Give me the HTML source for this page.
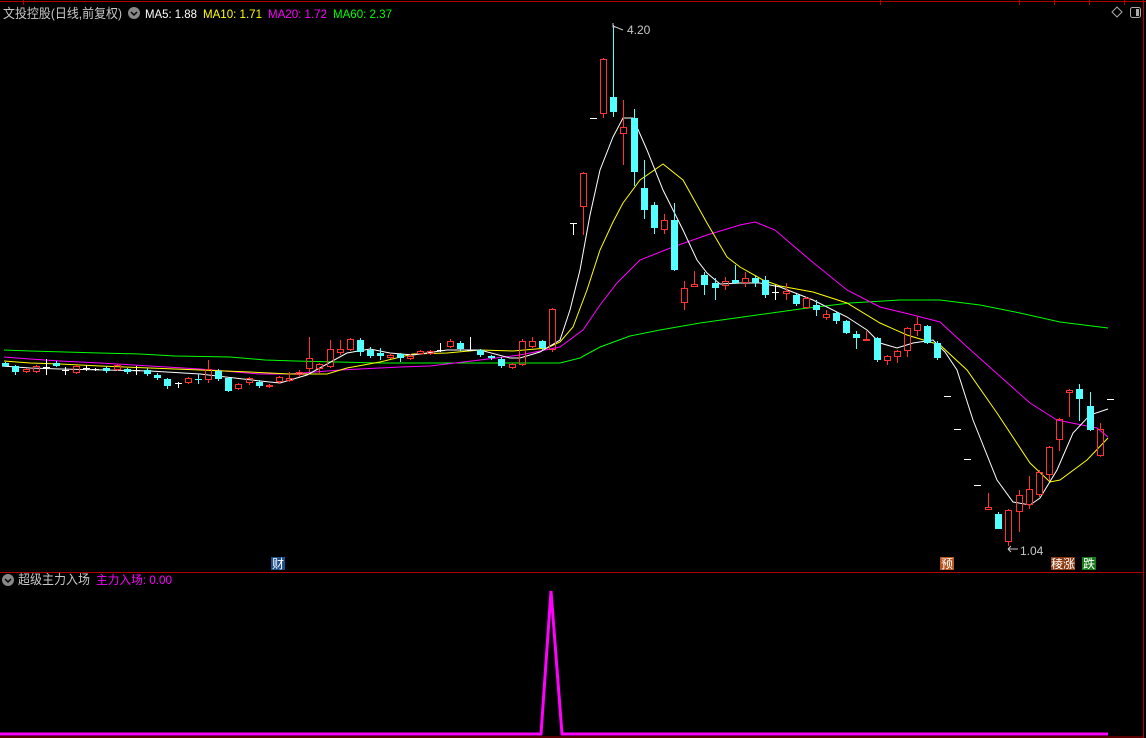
<!DOCTYPE html>
<html><head><meta charset="utf-8">
<style>
html,body{margin:0;padding:0;background:#000;width:1146px;height:738px;overflow:hidden}
svg{display:block}
text{font-family:"Liberation Sans","Noto Sans CJK SC",sans-serif}
</style></head>
<body>
<svg id="s" width="1146" height="738" viewBox="0 0 1146 738" xmlns="http://www.w3.org/2000/svg">
<rect width="1146" height="738" fill="#000"/>
<line x1="0" y1="1.5" x2="1146" y2="1.5" stroke="#b00000"/>
<g stroke="#b00000"><line x1="23.5" y1="0" x2="23.5" y2="5"/><line x1="880.5" y1="0" x2="880.5" y2="5"/><line x1="1019.5" y1="0" x2="1019.5" y2="5"/><line x1="1054.5" y1="0" x2="1054.5" y2="5"/><line x1="1089.5" y1="0" x2="1089.5" y2="5"/><line x1="1124.5" y1="0" x2="1124.5" y2="5"/></g>
<line x1="1143.5" y1="0" x2="1143.5" y2="738" stroke="#b00000"/>
<line x1="0" y1="572.5" x2="1143" y2="572.5" stroke="#b00000"/>
<line x1="0" y1="737" x2="1143" y2="737" stroke="#b00000"/>
<text x="3" y="18" font-size="13" fill="#c8c8c8" textLength="119" lengthAdjust="spacingAndGlyphs">文投控股(日线,前复权)</text>
<circle cx="134" cy="13" r="6" fill="#888"/><path d="M131 12l3 3 3-3" stroke="#000" stroke-width="1.5" fill="none"/>
<text x="145" y="18" font-size="12" fill="#fff" textLength="52" lengthAdjust="spacingAndGlyphs">MA5: 1.88</text>
<text x="203" y="18" font-size="12" fill="#ffff00" textLength="59" lengthAdjust="spacingAndGlyphs">MA10: 1.71</text>
<text x="268" y="18" font-size="12" fill="#ff00ff" textLength="59" lengthAdjust="spacingAndGlyphs">MA20: 1.72</text>
<text x="333" y="18" font-size="12" fill="#00ff00" textLength="59" lengthAdjust="spacingAndGlyphs">MA60: 2.37</text>
<path d="M1117 7l5 5-5 5-5-5z" stroke="#aaa" fill="none"/>
<rect x="1130.5" y="7.5" width="10" height="10" rx="2" stroke="#aaa" fill="none"/><rect x="1136" y="9" width="3" height="7" fill="#aaa"/>
<circle cx="8" cy="580" r="6" fill="#888"/><path d="M5 579l3 3 3-3" stroke="#000" stroke-width="1.5" fill="none"/>
<text x="18" y="584" font-size="13" fill="#c8c8c8" textLength="72" lengthAdjust="spacingAndGlyphs">超级主力入场</text>
<text x="96" y="584" font-size="12" fill="#ff00ff" textLength="76" lengthAdjust="spacingAndGlyphs">主力入场: 0.00</text>
<g id="ma" fill="none" stroke-width="1"></g>
<g id="cd"></g>
<text x="627" y="34" font-size="12" fill="#c8c8c8">4.20</text>
<path d="M613 26l10 4" stroke="#c8c8c8"/><path d="M613 23v4h3" stroke="#c8c8c8" fill="none"/>
<text x="1020" y="555" font-size="12" fill="#c8c8c8">1.04</text>
<path d="M1008 549h10M1008 549l3-3M1008 549l3 3" stroke="#c8c8c8" fill="none"/>
<rect x="271" y="557" width="14" height="13" fill="#1c4f8a"/><text x="272" y="568" font-size="12" fill="#fff">财</text>
<rect x="940" y="557" width="14" height="13" fill="#b5541c"/><text x="941" y="568" font-size="12" fill="#fff">预</text>
<rect x="1051" y="557" width="24" height="13" fill="#8a3a10"/><text x="1051" y="568" font-size="12" fill="#fff">稜涨</text>
<rect x="1082" y="557" width="14" height="13" fill="#1a7a1a"/><text x="1083" y="568" font-size="12" fill="#fff">跌</text>
<polyline points="0,734 541,734 551,591 562,734 1108,734" fill="none" stroke="#ff00ff" stroke-width="3"/>
</svg>
<script>
var NS="http://www.w3.org/2000/svg";
function el(t,a,p){var e=document.createElementNS(NS,t);for(var k in a)e.setAttribute(k,a[k]);p.appendChild(e);return e;}
var ma=document.getElementById('ma'),cd=document.getElementById('cd');
var lines={
"#00ff00":"4,350 30,351 65,352 100,353 140,354 175,356 230,357 265,360 295,361 380,363 560,363 580,358 600,347 630,336 660,330 700,323 750,316 800,309 850,303 900,300 940,300 980,305 1020,313 1060,322 1108,328",
"#ff00ff":"4,357 30,359 60,361 100,363 150,366 200,369 260,374 290,374 340,370 400,367 430,366 480,360 520,355 560,347 583,330 600,305 617,283 640,260 673,247 707,235 740,225 755,222 775,230 810,260 847,290 880,307 913,315 940,322 965,345 993,370 1030,403 1057,420 1097,428 1108,437",
"#ffff00":"4,361 30,363 60,364 100,366 150,368 200,370 250,372 290,374 327,374 347,368 380,362 413,354 447,353 480,350 513,351 547,348 560,342 573,327 587,290 600,250 613,222 623,203 640,180 663,164 683,180 707,223 727,257 740,267 763,280 780,286 813,292 847,303 880,323 907,335 940,345 967,370 997,413 1030,463 1050,482 1060,480 1087,460 1108,438",
"#ffffff":"2,366 30,368 60,369 150,371 200,374 260,381 280,383 307,375 347,353 370,349 390,353 413,355 447,350 480,350 510,358 520,358 540,352 560,340 570,310 580,270 590,215 600,170 613,137 623,118 633,118 647,150 663,190 683,230 697,260 707,273 720,284 740,283 760,283 780,287 813,300 847,317 867,330 880,343 897,348 913,343 933,340 945,352 957,370 973,420 997,480 1013,502 1030,505 1040,498 1057,470 1073,433 1090,415 1108,409"};
for(var c in lines)el('polyline',{points:lines[c],stroke:c},ma);
var D=[
[4.5,'d',363,366,362,367],[14.5,'d',366,372,365,375],[25.5,'u',369,372,368,373],[35.5,'u',366,372,365,373],[45.5,'w',367,367,359,375],
[55.5,'d',363,366,361,367],[65,'w',370,370,367,375],[75.5,'u',366,373,365,374],[85.5,'w',368,368,365,371],[95,'w',369,369,368,371],
[106,'d',368,371,366,373],[116.5,'u',365,370,364,371],[126.5,'d',369,372,368,374],[136,'w',370,370,366,375],[146.5,'d',370,374,368,376],
[156.5,'d',375,378,373,380],[166.5,'d',379,386,378,389],[177.5,'w',383,383,382,388],[187.5,'u',378,383,377,384],[197.5,'d',379,380,374,384],
[207.5,'u',369,380,360,383],[217.5,'d',371,379,369,381],[227.5,'d',378,391,377,392],[237.5,'u',384,389,383,390],[248.5,'u',378,383,377,385],
[258.5,'d',382,386,380,388],[268.5,'u',385,386,384,388],[278.5,'u',377,382,376,384],[288.5,'u',378,381,372,382],[299,'u',372,375,370,377],
[308.5,'u',358,369,337,372],[318.5,'u',364,369,363,373],[329.5,'u',349,367,340,368],[339.5,'u',349,353,340,355],[349.5,'u',339,350,338,351],
[359.5,'d',340,352,338,356],[369.5,'d',350,356,347,358],[379.5,'d',353,356,348,360],[389.5,'u',355,358,353,359],[399.5,'d',354,358,353,362],
[410,'u',356,359,354,360],[420,'u',351,354,350,355],[430,'u',351,354,350,355],[440,'w',350,350,343,352],[450,'u',341,347,339,348],
[460,'d',343,349,341,351],[470,'w',350,350,337,351],[480,'d',350,355,349,357],[490.5,'d',356,358,355,360],[500.5,'d',359,366,357,368],
[511.5,'u',364,368,363,369],[521.5,'u',341,365,339,366],[531.5,'u',341,347,337,348],[541.5,'d',341,348,340,350],[551.5,'u',309,350,308,352],
[572.5,'w',223,223,223,235],[582.5,'u',173,207,172,235],[592.5,'w',118,118,118,118],[602.5,'u',59,114,58,118],[612.5,'d',97,112,25,117],
[622.5,'u',127,134,100,165],[633.5,'d',118,172,109,186],[643.5,'d',188,210,160,219],[653.5,'d',205,228,202,234],[663.5,'u',220,230,214,234],
[673.5,'d',220,270,203,271],[683.5,'u',288,303,281,310],[693.5,'r',284,286,271,287],[703.5,'d',275,285,272,295],[714.5,'d',283,288,278,300],
[724.5,'u',281,286,277,290],[734.5,'d',280,283,265,284],[744.5,'u',278,283,272,287],[754.5,'d',278,283,276,287],[764.5,'d',280,295,276,298],
[774.5,'w',292,292,285,300],[785.5,'u',291,294,283,300],[795.5,'d',295,304,294,306],[805.5,'u',298,308,297,309],[815.5,'d',305,310,300,316],
[825.5,'r',314,317,310,320],[835.5,'d',313,321,312,324],[845.5,'d',321,333,320,334],[855.5,'d',334,338,331,349],[865.5,'r',339,340,331,341],
[876.5,'d',338,360,337,362],[886.5,'u',356,361,355,365],[896.5,'u',351,357,350,363],[906.5,'u',328,351,327,357],[916.5,'u',324,331,317,336],
[926.5,'d',326,343,325,344],[937,'d',343,358,341,360],[946.5,'w',396,396,396,396],[956.5,'w',429,429,429,429],[966.5,'w',459,459,459,459],
[976.5,'w',485,485,485,485],[987.5,'r',507,509,493,509],[997.5,'d',514,529,512,529],[1007.5,'u',510,542,509,546],[1018.5,'u',495,512,490,532],
[1028.5,'u',489,505,476,509],[1038.5,'u',472,495,470,497],[1048.5,'u',447,475,446,481],[1058.5,'u',419,440,418,451],[1068.5,'r',390,392,389,417],
[1078.5,'d',389,399,384,421],[1089.5,'d',406,430,392,431],[1099.5,'u',429,456,423,457],[1109.5,'w',399,399,399,399]];
D.forEach(function(d){
 var x=d[0],t=d[1],o=d[2],c=d[3],h=d[4],l=d[5];
 var col=t=='d'?'#54ffff':(t=='w'?'#ffffff':'#ff3232');
 var cx=Math.round(x)+0.5;
 if(h<o)el('line',{x1:cx,y1:h,x2:cx,y2:o,stroke:col},cd);
 if(l>c)el('line',{x1:cx,y1:c,x2:cx,y2:l,stroke:col},cd);
 if(t=='d')el('rect',{x:cx-3.5,y:o,width:7,height:Math.max(1,c-o),fill:col},cd);
 else if(t=='u')el('rect',{x:cx-3,y:o+0.5,width:6,height:Math.max(1,c-o-1),fill:'none',stroke:col},cd);
 else if(t=='r')el('rect',{x:cx-3,y:o+0.5,width:6,height:Math.max(1,c-o),fill:'none',stroke:col},cd);
 else el('line',{x1:cx-3.5,y1:o+0.5,x2:cx+3.5,y2:o+0.5,stroke:col},cd);
});
</script>
</body></html>
